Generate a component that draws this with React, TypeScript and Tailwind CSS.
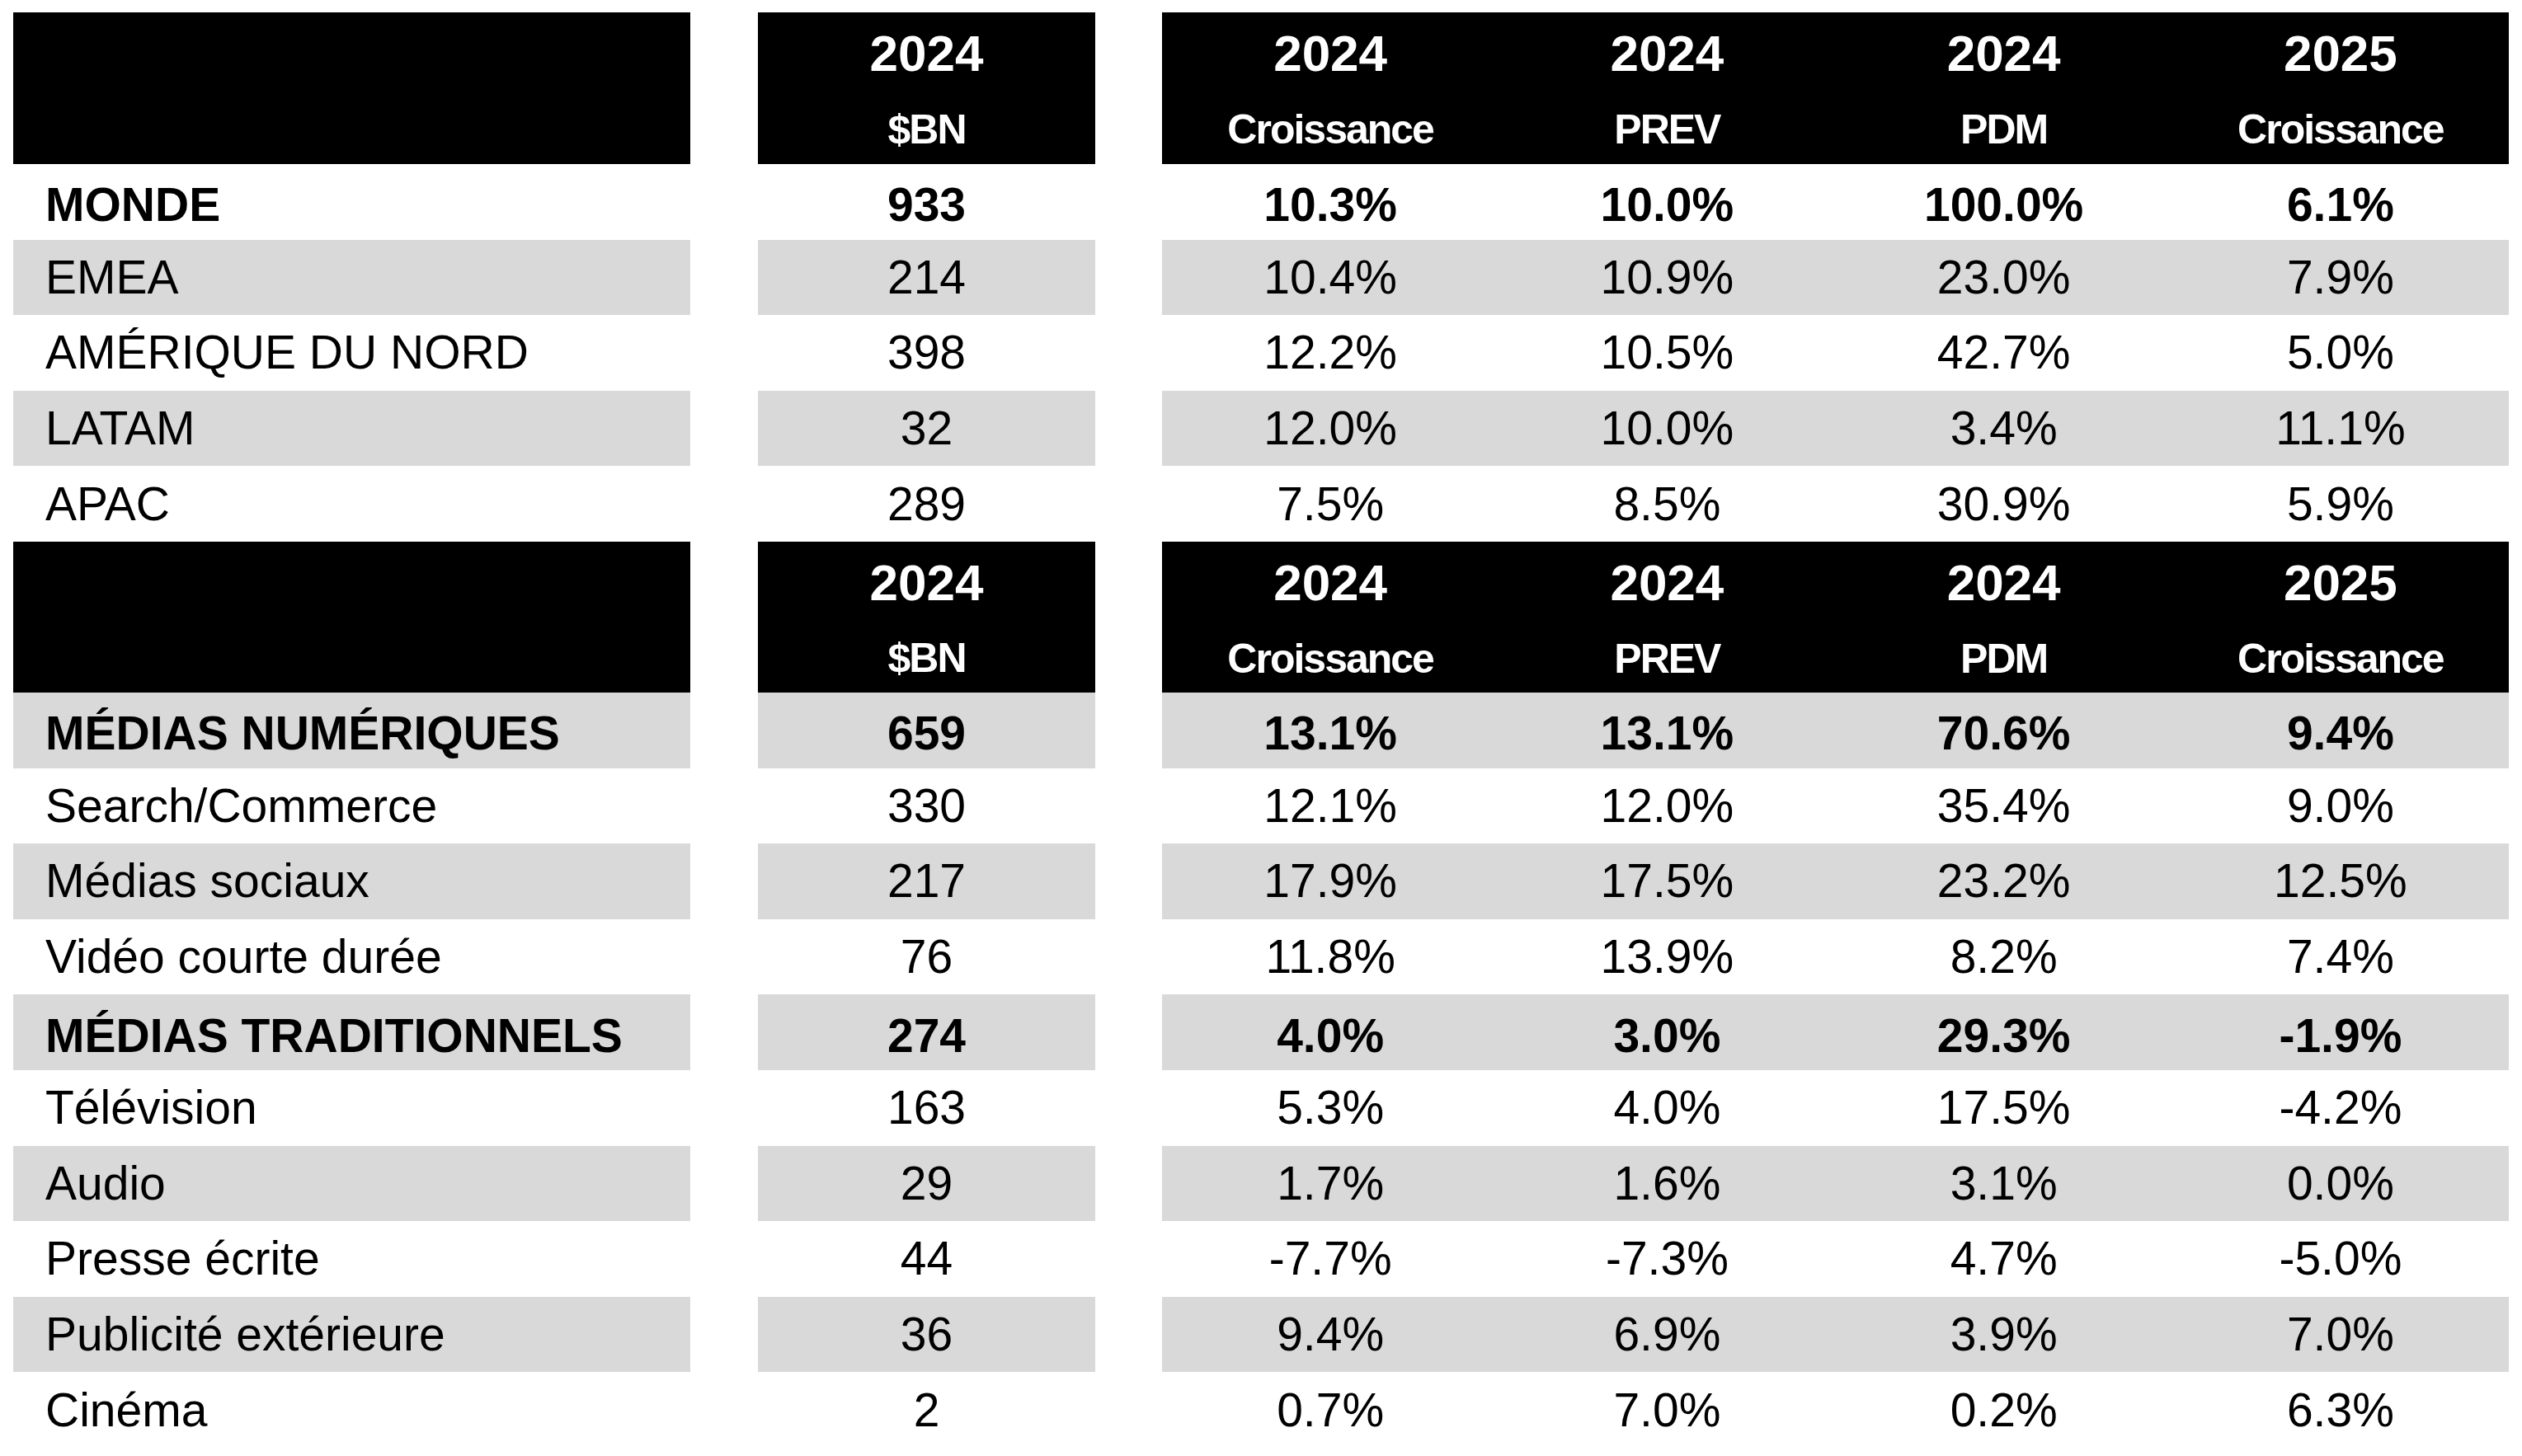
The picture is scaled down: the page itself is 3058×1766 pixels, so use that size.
import React from "react";

type Row = {
  label: string;
  bn: string;
  vals: [string, string, string, string];
  bold?: boolean;
  gray?: boolean;
};

const regions: Row[] = [
  { label: "MONDE", bn: "933", vals: ["10.3%", "10.0%", "100.0%", "6.1%"], bold: true },
  { label: "EMEA", bn: "214", vals: ["10.4%", "10.9%", "23.0%", "7.9%"], gray: true },
  { label: "AMÉRIQUE DU NORD", bn: "398", vals: ["12.2%", "10.5%", "42.7%", "5.0%"] },
  { label: "LATAM", bn: "32", vals: ["12.0%", "10.0%", "3.4%", "11.1%"], gray: true },
  { label: "APAC", bn: "289", vals: ["7.5%", "8.5%", "30.9%", "5.9%"] },
];

const medias: Row[] = [
  { label: "MÉDIAS NUMÉRIQUES", bn: "659", vals: ["13.1%", "13.1%", "70.6%", "9.4%"], bold: true, gray: true },
  { label: "Search/Commerce", bn: "330", vals: ["12.1%", "12.0%", "35.4%", "9.0%"] },
  { label: "Médias sociaux", bn: "217", vals: ["17.9%", "17.5%", "23.2%", "12.5%"], gray: true },
  { label: "Vidéo courte durée", bn: "76", vals: ["11.8%", "13.9%", "8.2%", "7.4%"] },
  { label: "MÉDIAS TRADITIONNELS", bn: "274", vals: ["4.0%", "3.0%", "29.3%", "-1.9%"], bold: true, gray: true },
  { label: "Télévision", bn: "163", vals: ["5.3%", "4.0%", "17.5%", "-4.2%"] },
  { label: "Audio", bn: "29", vals: ["1.7%", "1.6%", "3.1%", "0.0%"], gray: true },
  { label: "Presse écrite", bn: "44", vals: ["-7.7%", "-7.3%", "4.7%", "-5.0%"] },
  { label: "Publicité extérieure", bn: "36", vals: ["9.4%", "6.9%", "3.9%", "7.0%"], gray: true },
  { label: "Cinéma", bn: "2", vals: ["0.7%", "7.0%", "0.2%", "6.3%"] },
];

const heads = [
  ["2024", "Croissance"],
  ["2024", "PREV"],
  ["2024", "PDM"],
  ["2025", "Croissance"],
];

function HeadCell({ year, sub }: { year: string; sub: string }) {
  return (
    <div className="flex flex-col items-center">
      <div className="flex h-[92px] items-center pt-[8px] text-[62px] font-bold leading-none">{year}</div>
      <div className="flex h-[92px] items-center pt-[8px] text-[50px] font-bold leading-none tracking-[-2px]">
        {sub}
      </div>
    </div>
  );
}

function Header({ h }: { h: string }) {
  return (
    <div className={`flex ${h} text-white`}>
      <div className="w-[821px] bg-black" />
      <div className="w-[82px]" />
      <div className="flex w-[409px] justify-center bg-black">
        <HeadCell year="2024" sub="$BN" />
      </div>
      <div className="w-[81px]" />
      <div className="grid w-[1633px] grid-cols-4 bg-black">
        {heads.map(([y, s], i) => (
          <HeadCell key={i} year={y} sub={s} />
        ))}
      </div>
    </div>
  );
}

function DataRow({ row }: { row: Row }) {
  const bg = row.gray ? "bg-[#d9d9d9]" : "bg-white";
  // bold rows sit a little lower in the source table
  const weight = row.bold ? "font-bold pt-[8px]" : "font-normal pt-0";
  return (
    <div className={`flex h-[91.6px] text-[57px] leading-none text-black`}>
      <div className={`flex w-[821px] items-center pl-[39px] ${weight} ${bg}`}>{row.label}</div>
      <div className="w-[82px]" />
      <div className={`flex w-[409px] items-center justify-center ${weight} ${bg}`}>{row.bn}</div>
      <div className="w-[81px]" />
      <div className={`grid w-[1633px] grid-cols-4 ${bg}`}>
        {row.vals.map((v, i) => (
          <div key={i} className={`flex items-center justify-center ${weight}`}>
            {v}
          </div>
        ))}
      </div>
    </div>
  );
}

export default function App() {
  return (
    <div className="min-h-screen bg-white pl-[16px] pt-[15px] font-['Liberation_Sans',Arial,sans-serif]">
      <Header h="h-[184px]" />
      {regions.map((r) => (
        <DataRow key={r.label} row={r} />
      ))}
      <Header h="h-[183px]" />
      {medias.map((r) => (
        <DataRow key={r.label} row={r} />
      ))}
    </div>
  );
}
